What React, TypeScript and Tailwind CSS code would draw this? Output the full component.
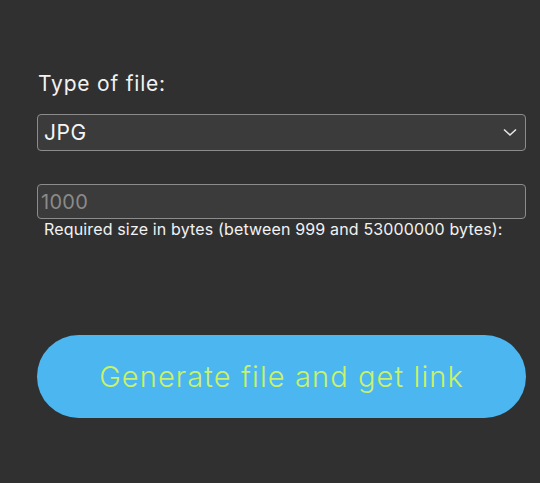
import React from 'react';

export default function App() {
  return (
    <div className="min-h-[483px] w-full bg-[#303030] font-['Inter',sans-serif] text-white">
      <div className="pl-[37px] pr-[14px] pt-[70px]">
        {/* FILE TYPE */}
        <label className="block pl-px text-[21px] leading-[28px] tracking-[0.8px] text-[#f2f2f2]">Type of file:</label>
        <div className="relative mt-[16px]">
          <select
            defaultValue="JPG"
            className="h-[37px] w-full appearance-none rounded-[4px] border border-[#8c8c8c] bg-[#3b3b3b] pl-[6px] text-[21px] tracking-[0.5px] text-[#f5f5f5] outline-none"
          >
            <option>JPG</option>
            <option>PNG</option>
            <option>PDF</option>
          </select>
          <svg
            className="pointer-events-none absolute right-[8px] top-[12px]"
            width="16"
            height="12"
            viewBox="0 0 16 12"
            fill="none"
            stroke="#e6e6e6"
            strokeWidth="1.6"
          >
            <path d="M2 3.5 L8 9 L14 3.5" />
          </svg>
        </div>

        {/* SIZE */}
        <input
          type="text"
          placeholder="1000"
          className="mt-[33px] block h-[35px] w-full rounded-[4px] border border-[#8c8c8c] bg-[#3b3b3b] pl-[3px] text-[20px] tracking-[0.3px] text-white outline-none placeholder:text-[#8a8a8a]"
        />
        <p className="pl-[7px] text-[16px] leading-[20px] tracking-[0.15px] text-[#f2f2f2]">
          Required size in bytes (between 999 and 53000000 bytes):
        </p>

        {/* SUBMIT */}
        <button className="mt-[96px] flex h-[83px] w-full items-center justify-center rounded-full bg-[#4bb6f0] text-[29px] font-light tracking-[1.1px] text-[#c8f26a]">
          Generate file and get link
        </button>
      </div>
    </div>
  );
}
